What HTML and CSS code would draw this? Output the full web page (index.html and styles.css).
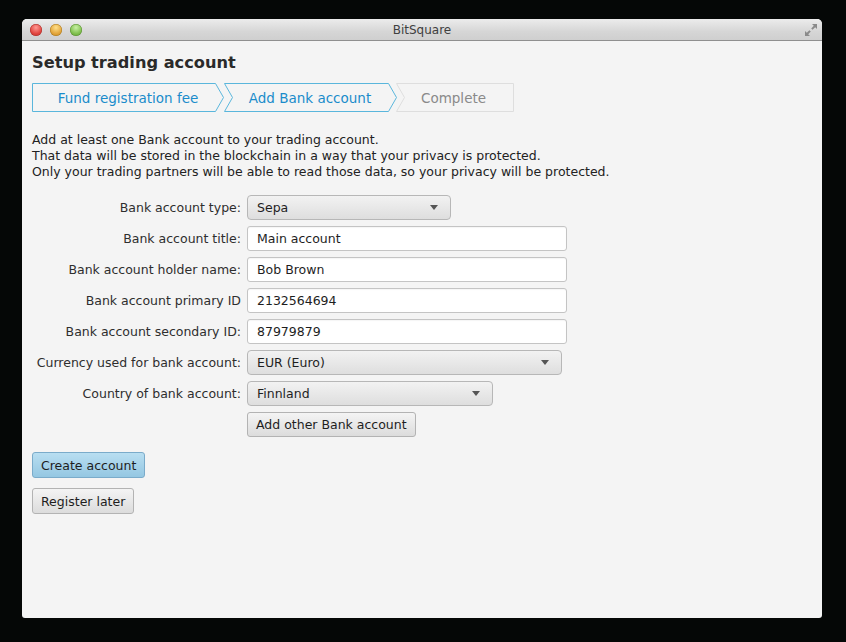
FILE: index.html
```html
<!DOCTYPE html>
<html>
<head>
<meta charset="utf-8">
<title>BitSquare</title>
<link rel="stylesheet" href="styles.css">
</head>
<body>
<div class="window">
  <div class="titlebar">
    <div class="lights">
      <span class="light red"></span>
      <span class="light yellow"></span>
      <span class="light green"></span>
    </div>
    <div class="title">BitSquare</div>
    <svg class="expand" width="14" height="14" viewBox="0 0 14 14">
      <path d="M8 1h5v5l-1.8-1.8-2.6 2.6-1.4-1.4 2.6-2.6z" fill="#8a8a8a"/>
      <path d="M6 13H1V8l1.8 1.8 2.6-2.6 1.4 1.4-2.6 2.6z" fill="#8a8a8a"/>
    </svg>
  </div>
  <div class="content">
    <h1 class="heading">Setup trading account</h1>
    <div class="steps">
      <div class="step step-first active">
        <svg class="step-bg" width="192" height="29" viewBox="0 0 192 29"><polygon points="0.5,0.5 183.5,0.5 191.5,14.5 183.5,28.5 0.5,28.5" /></svg>
        <span class="step-label">Fund registration fee</span>
      </div>
      <div class="step step-mid active">
        <svg class="step-bg" width="173" height="29" viewBox="0 0 173 29"><polygon points="0.5,0.5 164.5,0.5 172.5,14.5 164.5,28.5 0.5,28.5 8.5,14.5" /></svg>
        <span class="step-label">Add Bank account</span>
      </div>
      <div class="step step-last">
        <svg class="step-bg" width="118" height="29" viewBox="0 0 118 29"><polygon points="0.5,0.5 117.5,0.5 117.5,28.5 0.5,28.5 8.5,14.5" /></svg>
        <span class="step-label">Complete</span>
      </div>
    </div>
    <div class="info">
      <p>Add at least one Bank account to your trading account.</p>
      <p>That data will be stored in the blockchain in a way that your privacy is protected.</p>
      <p>Only your trading partners will be able to read those data, so your privacy will be protected.</p>
    </div>
    <div class="form">
      <label class="lbl">Bank account type:</label>
      <div class="combo w-type"><span>Sepa</span><i class="arrow"></i></div>

      <label class="lbl">Bank account title:</label>
      <div class="field w-full">Main account</div>

      <label class="lbl">Bank account holder name:</label>
      <div class="field w-full">Bob Brown</div>

      <label class="lbl">Bank account primary ID</label>
      <div class="field w-full">2132564694</div>

      <label class="lbl">Bank account secondary ID:</label>
      <div class="field w-full">87979879</div>

      <label class="lbl">Currency used for bank account:</label>
      <div class="combo w-currency"><span>EUR (Euro)</span><i class="arrow"></i></div>

      <label class="lbl">Country of bank account:</label>
      <div class="combo w-country"><span>Finnland</span><i class="arrow"></i></div>

      <span></span>
      <button class="btn">Add other Bank account</button>
    </div>
    <div class="actions">
      <button class="btn btn-tall btn-default">Create account</button>
      <button class="btn btn-tall">Register later</button>
    </div>
  </div>
</div>
</body>
</html>
```
FILE: styles.css
```css
* { box-sizing: border-box; }
html, body { margin: 0; padding: 0; }
body {
  background: #050706;
  width: 846px;
  height: 642px;
  padding: 19px 0 0 22px;
  font-family: "DejaVu Sans", "Liberation Sans", sans-serif;
  overflow: hidden;
}
.window {
  width: 800px;
  height: 599px;
  background: #f4f4f4;
  border-radius: 5px 5px 3px 3px;
  overflow: hidden;
  display: flex;
  flex-direction: column;
}
.titlebar {
  height: 22px;
  flex: none;
  background: linear-gradient(#ececec, #d6d6d6 60%, #cfcfcf);
  border-bottom: 1px solid #8f8f8f;
  display: flex;
  align-items: center;
  position: relative;
  padding: 0 0 0 8px;
}
.lights { display: flex; gap: 8px; }
.light {
  width: 12px; height: 12px; border-radius: 50%;
  display: block;
}
.red { background: radial-gradient(circle at 50% 30%, #ff9a94, #e0443e 60%, #b3312c); box-shadow: inset 0 0 0 0.5px #a8302b; }
.yellow { background: radial-gradient(circle at 50% 30%, #ffe08a, #e2a43a 60%, #b77d1c); box-shadow: inset 0 0 0 0.5px #a87a22; }
.green { background: radial-gradient(circle at 50% 30%, #c8f0a4, #7fbf4d 60%, #5a9330); box-shadow: inset 0 0 0 0.5px #5b8e34; }
.title {
  position: absolute;
  left: 0; right: 0; top: 4px;
  text-align: center;
  font-size: 12px;
  color: #404040;
  pointer-events: none;
}
.expand { position: absolute; right: 4px; top: 4px; }
.content {
  flex: 1;
  padding: 11px 10px 0 10px;
}
.heading {
  margin: 0;
  font-size: 16.2px;
  font-weight: bold;
  line-height: 22px;
  color: #2a2a2a;
}
.steps {
  display: flex;
  margin-top: 9px;
  height: 29px;
}
.step {
  position: relative;
  height: 29px;
  display: flex;
  align-items: center;
  justify-content: center;
  font-size: 13.5px;
}
.step-bg { position: absolute; left: 0; top: 0; }
.step-bg polygon { fill: #f4f4f4; stroke: #5ab6dc; stroke-width: 1; }
.step-last .step-bg polygon { stroke: #dedede; }
.step-label { position: relative; color: #1a8ccb; }
.step-last .step-label { color: #8a8a8a; }
.step-first { width: 192px; }
.step-mid { width: 172px; }
.step-last { width: 118px; padding-right: 3px; }
.info {
  margin-top: 20px;
  font-size: 12.5px;
  line-height: 16px;
  color: #222;
}
.info p { margin: 0; }
.form {
  margin-top: 15px;
  display: grid;
  grid-template-columns: 209px auto;
  column-gap: 6px;
  row-gap: 6px;
  grid-auto-rows: 25px;
  justify-items: start;
  align-items: center;
}
.lbl {
  justify-self: end;
  font-size: 12.5px;
  color: #2e2e2e;
}
.field {
  height: 25px;
  background: #fff;
  border: 1px solid #c4c4c4;
  border-radius: 3px;
  font-size: 12.5px;
  color: #1e1e1e;
  padding: 0 9px;
  display: flex;
  align-items: center;
  box-shadow: inset 0 1px 1px rgba(0,0,0,0.04);
}
.combo {
  height: 25px;
  background: linear-gradient(#f2f2f2, #dedede);
  border: 1px solid #b7b7b7;
  border-radius: 4px;
  font-size: 12.5px;
  color: #1e1e1e;
  padding: 0 9px;
  display: flex;
  align-items: center;
  justify-content: space-between;
}
.arrow {
  width: 0; height: 0;
  border-left: 4.5px solid transparent;
  border-right: 4.5px solid transparent;
  border-top: 5px solid #555;
  margin-right: 3px;
}
.w-type { width: 204px; }
.w-full { width: 320px; }
.w-currency { width: 315px; }
.w-country { width: 246px; }
.btn {
  height: 25px;
  font-family: inherit;
  font-size: 12.5px;
  color: #1e1e1e;
  background: linear-gradient(#f4f4f4, #dcdcdc);
  border: 1px solid #b3b3b3;
  border-radius: 3px;
  padding: 0 8px;
  display: block;
}
.btn-tall { height: 26px; }
.btn-default {
  background: linear-gradient(#b8def1, #94c7e2);
  border-color: #7aabca;
}
.actions {
  margin-top: 15px;
  display: flex;
  flex-direction: column;
  align-items: flex-start;
  gap: 10px;
}
```
